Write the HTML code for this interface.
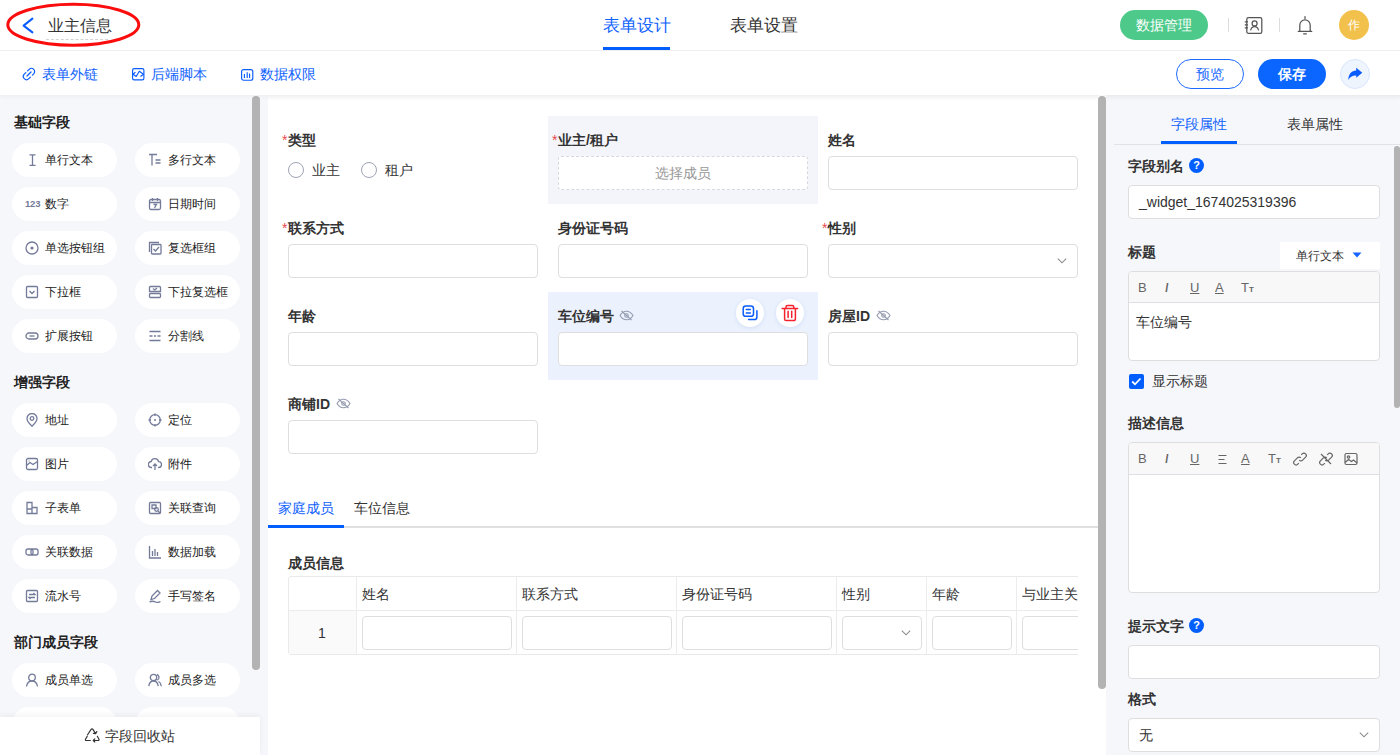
<!DOCTYPE html>
<html><head><meta charset="utf-8">
<style>
*{box-sizing:border-box;margin:0;padding:0}
html,body{width:1400px;height:755px;overflow:hidden;background:#fff;font-family:"Liberation Sans",sans-serif;color:#333}
.a{position:absolute}
#hdr{left:0;top:0;width:1400px;height:51px;background:#fff;border-bottom:1px solid #eeeff1}
#tb{left:0;top:51px;width:1400px;height:44px;background:#fff;box-shadow:0 2px 4px rgba(0,0,0,.04);z-index:2}
#lp{left:0;top:95px;width:268px;height:660px;background:#f6f7fb}
#cv{left:268px;top:95px;width:838px;height:660px;background:#fff}
#rp{left:1106px;top:95px;width:294px;height:660px;background:#f6f7fb}
.sb{background:#b3b3b3;border-radius:4px}
.pill{position:absolute;width:105px;height:34px;background:#fff;border-radius:17px}
.pill .t{position:absolute;left:33px;top:10px;font-size:12px;line-height:14px;color:#222;white-space:nowrap}
.pill svg{position:absolute;left:13px;top:10px}
.sec{position:absolute;left:14px;font-size:14px;font-weight:bold;color:#222;line-height:16px}
.lbl{position:absolute;font-size:14px;font-weight:bold;color:#333;line-height:16px;white-space:nowrap}
.req{color:#e5484d;font-weight:normal;display:inline-block;width:6px;font-size:14px}
.inp{position:absolute;width:250px;height:34px;border:1px solid #dedede;border-radius:4px;background:#fff}
</style></head><body>
<div id="hdr" class="a">
<svg class="a" style="left:0;top:0" width="150" height="50"><ellipse cx="73.3" cy="24.8" rx="65.5" ry="20.5" fill="none" stroke="#fb0d0d" stroke-width="3"/></svg>
<svg class="a" style="left:22px;top:17px" width="14" height="18"><path d="M10.4 1.6 L1.6 8.6 L10.4 15.4" fill="none" stroke="#0a5cff" stroke-width="2" stroke-linecap="round" stroke-linejoin="round"/></svg>
<div class="a" style="left:48px;top:16px;font-size:16px;line-height:19px;color:#333">业主信息</div>
<div class="a" style="left:46px;top:39px;width:62px;border-top:1px dashed #d4d4d4"></div>
<div class="a" style="left:603px;top:16px;font-size:16.5px;line-height:19px;color:#0f62fe">表单设计</div>
<div class="a" style="left:603px;top:47px;width:67px;height:3px;background:#005eff"></div>
<div class="a" style="left:730px;top:16px;font-size:16.5px;line-height:19px;color:#333">表单设置</div>
<div class="a" style="left:1120px;top:10px;width:88px;height:30px;border-radius:15px;background:#4dc98a;color:#fff;font-size:14px;font-weight:500;line-height:30px;text-align:center">数据管理</div>
<div class="a" style="left:1228px;top:18px;width:1px;height:14px;background:#dcdcdc"></div>
<div class="a" style="left:1279px;top:18px;width:1px;height:14px;background:#dcdcdc"></div>
<svg class="a" style="left:1243px;top:15px" width="22" height="21" fill="none" stroke="#555" stroke-width="1.25"><rect x="3.8" y="2.6" width="15" height="15.8" rx="1.6"/><path d="M1.8 6.8h3.2M1.8 9.8h3.2M1.8 12.8h3.2"/><circle cx="11.6" cy="8.4" r="2.5"/><path d="M7.6 15.4c0.6-2.6 2-3.8 4-3.8s3.4 1.2 4 3.8"/></svg>
<svg class="a" style="left:1296px;top:15px" width="18" height="21" fill="none" stroke="#555" stroke-width="1.25"><path d="M3.8 16V10.2a5.2 5.4 0 0 1 10.4 0V16M2.3 16.4h13.4" stroke-linejoin="round" stroke-linecap="round"/><path d="M9 1.6v2M7.6 18.8h2.8" stroke-linecap="round"/></svg>
<div class="a" style="left:1339px;top:10px;width:30px;height:30px;border-radius:15px;background:#f2c14b;color:#fff;font-size:12px;font-weight:500;line-height:30px;text-align:center">作</div>
</div>
<div id="tb" class="a">
<svg class="a" style="left:21.7px;top:15.8px" width="14" height="14" fill="none" stroke="#0a5cff" stroke-width="1.2" stroke-linecap="round"><path d="M5.6 3.9L7.2 2.3A3 3 0 0 1 11.7 6.8L10.4 8.1M8.4 10.1L6.8 11.7A3 3 0 0 1 2.3 7.2L3.8 5.7M5 9L9 5"/></svg>
<div class="a" style="left:42px;top:15px;font-size:14px;line-height:17px;color:#0f62fe">表单外链</div>
<svg class="a" style="left:132px;top:17px" width="13" height="13" fill="none" stroke="#0a5cff" stroke-width="1.15" stroke-linejoin="round"><rect x="0.6" y="0.6" width="11.3" height="11.3" rx="1.6"/><path d="M3.4 4.3L1 6.2L4.2 8.5L7.3 3.2L11.5 6.2L8.5 8.5"/></svg>
<div class="a" style="left:151px;top:15px;font-size:14px;line-height:17px;color:#0f62fe">后端脚本</div>
<svg class="a" style="left:241px;top:18px" width="13" height="12" fill="none" stroke="#0a5cff" stroke-width="1.15"><rect x="0.6" y="0.6" width="11.2" height="10.6" rx="2"/><path d="M3.4 5v4M6.2 3.2v5.8M8.6 4.5v4.5"/></svg>
<div class="a" style="left:260px;top:15px;font-size:14px;line-height:17px;color:#0f62fe">数据权限</div>
<div class="a" style="left:1176px;top:8px;width:68px;height:30px;border-radius:15px;border:1px solid #1f6bff;color:#1f6bff;font-size:14px;line-height:28px;text-align:center">预览</div>
<div class="a" style="left:1258px;top:8px;width:68px;height:30px;border-radius:15px;background:#0a66ff;color:#fff;font-size:14px;line-height:30px;text-align:center;font-weight:bold">保存</div>
<div class="a" style="left:1340px;top:8px;width:30px;height:30px;border-radius:15px;background:#eff5ff;border:1px solid #d9e6fc"></div>
<svg class="a" style="left:1347px;top:16px" width="17" height="15"><path d="M9.2 0.7L15.3 5.7L9.2 10.8V8.4C5.5 8.2 3 9.8 1.2 12.9C1.5 7 4.5 3.6 9.2 3.4Z" fill="#0a5cff"/></svg>
</div>
<div id="lp" class="a">
<div class="pill" style="left:12px;top:48px"><svg width="14" height="14"><path d="M4.5 1.8h6M7.5 1.8v10.6M4.5 12.4h6" fill="none" stroke="#737b99" stroke-width="1.3"/></svg><div class="t">单行文本</div></div>
<div class="pill" style="left:135px;top:48px"><svg width="14" height="14"><path d="M1 1.5h8M4 1.5v11M7.5 7h5M7.5 10h5" fill="none" stroke="#737b99" stroke-width="1.3"/></svg><div class="t">多行文本</div></div>
<div class="pill" style="left:12px;top:92px"><div class="a" style="left:13px;top:11px;font-size:9.5px;font-weight:bold;color:#737b99;line-height:11px;letter-spacing:-0.2px">123</div><div class="t">数字</div></div>
<div class="pill" style="left:135px;top:92px"><svg width="14" height="14"><rect x="1.5" y="2.5" width="11" height="10" rx="1.5" fill="none" stroke="#737b99" stroke-width="1.3"/><path d="M1.5 5.5h11M4.5 1v3M9.5 1v3M5.5 7.5h3l-2 3.5" fill="none" stroke="#737b99" stroke-width="1.3"/></svg><div class="t">日期时间</div></div>
<div class="pill" style="left:12px;top:136px"><svg width="14" height="14"><circle cx="7" cy="7" r="6" fill="none" stroke="#737b99" stroke-width="1.3"/><circle cx="7" cy="7" r="1.6" fill="#737b99"/></svg><div class="t">单选按钮组</div></div>
<div class="pill" style="left:135px;top:136px"><svg width="14" height="14"><path d="M1.5 11V1.5H11" fill="none" stroke="#737b99" stroke-width="1.3"/><rect x="3.5" y="3.5" width="9.5" height="9.5" rx="0.8" fill="none" stroke="#737b99" stroke-width="1.3"/><path d="M5.5 8l2 2 3.5-4" fill="none" stroke="#737b99" stroke-width="1.3"/></svg><div class="t">复选框组</div></div>
<div class="pill" style="left:12px;top:180px"><svg width="14" height="14"><rect x="1.5" y="1.5" width="11" height="11" rx="1" fill="none" stroke="#737b99" stroke-width="1.3"/><path d="M4.5 6l2.5 2.5L9.5 6" fill="none" stroke="#737b99" stroke-width="1.3"/></svg><div class="t">下拉框</div></div>
<div class="pill" style="left:135px;top:180px"><svg width="14" height="14"><path d="M1.5 6.5V2.5a1 1 0 0 1 1-1h9a1 1 0 0 1 1 1v4Z" fill="none" stroke="#737b99" stroke-width="1.3"/><rect x="1.5" y="8.5" width="11" height="4" rx="1" fill="none" stroke="#737b99" stroke-width="1.3"/><path d="M5 3.5l1.8 1.5L9 3" fill="none" stroke="#737b99" stroke-width="1.3"/></svg><div class="t">下拉复选框</div></div>
<div class="pill" style="left:12px;top:224px"><svg width="14" height="14"><rect x="1" y="4" width="12" height="6" rx="3" fill="none" stroke="#737b99" stroke-width="1.3"/><path d="M4.5 7h5" fill="none" stroke="#737b99" stroke-width="1.3"/></svg><div class="t">扩展按钮</div></div>
<div class="pill" style="left:135px;top:224px"><svg width="14" height="14"><path d="M1.5 2.5h11M1.5 7h3M6 7h2M9.5 7h3M1.5 11.5h11" fill="none" stroke="#737b99" stroke-width="1.3"/></svg><div class="t">分割线</div></div>
<div class="pill" style="left:12px;top:308px"><svg width="14" height="14"><path d="M7 13.2S2 8.6 2 5.5a5 5 0 0 1 10 0c0 3.1-5 7.7-5 7.7Z" fill="none" stroke="#737b99" stroke-width="1.3"/><circle cx="7" cy="5.5" r="1.8" fill="none" stroke="#737b99" stroke-width="1.3"/></svg><div class="t">地址</div></div>
<div class="pill" style="left:135px;top:308px"><svg width="14" height="14"><circle cx="7" cy="7" r="5.3" fill="none" stroke="#737b99" stroke-width="1.3"/><path d="M7 0.5v2.5M7 11v2.5M0.5 7H3M11 7h2.5" fill="none" stroke="#737b99" stroke-width="1.3"/><circle cx="7" cy="7" r="1" fill="#737b99"/></svg><div class="t">定位</div></div>
<div class="pill" style="left:12px;top:352px"><svg width="14" height="14"><rect x="1.5" y="1.5" width="11" height="11" rx="1.5" fill="none" stroke="#737b99" stroke-width="1.3"/><path d="M1.5 8.5L5 5.5l3 2 4.5-3" fill="none" stroke="#737b99" stroke-width="1.3"/><circle cx="4" cy="4" r="0.6" fill="#737b99"/></svg><div class="t">图片</div></div>
<div class="pill" style="left:135px;top:352px"><svg width="14" height="14"><path d="M4 10.5H3.5a3 3 0 0 1-0.3-6 3.8 3.8 0 0 1 7.4 0.2 2.8 2.8 0 0 1 0 5.8H10" fill="none" stroke="#737b99" stroke-width="1.3"/><path d="M7 13V7M5 9l2-2 2 2" fill="none" stroke="#737b99" stroke-width="1.3"/></svg><div class="t">附件</div></div>
<div class="pill" style="left:12px;top:396px"><svg width="14" height="14"><path d="M2 1.5h5v11H2ZM7 6.5h5v6H7ZM2 8h5" fill="none" stroke="#737b99" stroke-width="1.3"/></svg><div class="t">子表单</div></div>
<div class="pill" style="left:135px;top:396px"><svg width="14" height="14"><rect x="1.5" y="1.5" width="11" height="11" rx="1" fill="none" stroke="#737b99" stroke-width="1.3"/><path d="M4 4h4v3.5H4Z" fill="none" stroke="#737b99" stroke-width="1.3"/><circle cx="8.5" cy="8.5" r="1.8" fill="none" stroke="#737b99" stroke-width="1.3"/><path d="M10 10l2 2" fill="none" stroke="#737b99" stroke-width="1.3"/></svg><div class="t">关联查询</div></div>
<div class="pill" style="left:12px;top:440px"><svg width="14" height="14"><rect x="1" y="4" width="7" height="6" rx="2" fill="none" stroke="#737b99" stroke-width="1.3"/><rect x="6" y="4" width="7" height="6" rx="2" fill="none" stroke="#737b99" stroke-width="1.3"/></svg><div class="t">关联数据</div></div>
<div class="pill" style="left:135px;top:440px"><svg width="14" height="14"><path d="M1.5 1v12h11.5M4.5 6v5M7 4v7M9.5 7v4" fill="none" stroke="#737b99" stroke-width="1.3"/></svg><div class="t">数据加载</div></div>
<div class="pill" style="left:12px;top:484px"><svg width="14" height="14"><rect x="1.5" y="1.5" width="11" height="11" rx="1" fill="none" stroke="#737b99" stroke-width="1.3"/><path d="M4 5.5h6L8.5 4M10 8.5H4l1.5 1.5" fill="none" stroke="#737b99" stroke-width="1.3"/></svg><div class="t">流水号</div></div>
<div class="pill" style="left:135px;top:484px"><svg width="14" height="14"><path d="M3 10.5l1-3.5 5.5-5.5 2.5 2.5-5.5 5.5ZM1.5 13c2-1 4-1 6 0s3.5 0 5-0.5" fill="none" stroke="#737b99" stroke-width="1.3"/></svg><div class="t">手写签名</div></div>
<div class="pill" style="left:12px;top:568px"><svg width="14" height="14"><circle cx="7" cy="4.5" r="3.3" fill="none" stroke="#737b99" stroke-width="1.3"/><path d="M1.5 13.5c0.5-3.5 2.5-5.5 5.5-5.5s5 2 5.5 5.5" fill="none" stroke="#737b99" stroke-width="1.3"/></svg><div class="t">成员单选</div></div>
<div class="pill" style="left:135px;top:568px"><svg width="14" height="14"><circle cx="5.5" cy="4.5" r="3.2" fill="none" stroke="#737b99" stroke-width="1.3"/><path d="M0.8 13.2c0.4-3.3 2.2-5.2 4.7-5.2s4.3 1.9 4.7 5.2M8.8 1.5a3 3 0 0 1 0.5 5.6M10.5 8.5c1.6 0.8 2.6 2.4 2.8 4.7" fill="none" stroke="#737b99" stroke-width="1.3"/></svg><div class="t">成员多选</div></div>
<div class="pill" style="left:12px;top:612px"></div>
<div class="pill" style="left:135px;top:612px"></div>
<div class="sec" style="top:19px">基础字段</div>
<div class="sec" style="top:279px">增强字段</div>
<div class="sec" style="top:539px">部门成员字段</div>
<div class="a sb" style="left:252px;top:1px;width:8px;height:574px"></div>
<div class="a" style="left:0;top:622px;width:260px;height:38px;background:#fff;box-shadow:0 -2px 6px rgba(0,0,0,.05)"></div>
<svg class="a" style="left:84px;top:633px" width="17" height="15" fill="none" stroke="#333" stroke-width="1.15" stroke-linecap="round" stroke-linejoin="round"><path d="M3.4 7L6.9 1.6Q8 0.2 9.1 1.6L11.6 5.6M12.8 3.6L11.6 5.6 9.4 5.4"/><path d="M13.3 8.3L14.9 11Q15.5 12.5 14 12.5H9.2M10.8 10.9L9.2 12.5 10.8 14"/><path d="M6.4 12.5H2.4Q0.9 12.5 1.6 11L3.2 8.4"/></svg>
<div class="a" style="left:105px;top:633px;font-size:14px;line-height:17px;color:#333">字段回收站</div>
</div>
<div id="cv" class="a">
<div class="a" style="left:0;top:0;width:830px;height:6px;background:linear-gradient(#f7f7f8,#fff)"></div>
<div class="a" style="left:280px;top:21px;width:270px;height:88px;background:#f4f5fa"></div>
<div class="a" style="left:280px;top:197px;width:270px;height:88px;background:#ebf2fe"></div>
<div class="lbl" style="left:14px;top:37px"><span class="req">*</span>类型</div>
<div class="a" style="left:20px;top:67px;width:16px;height:16px;border:1px solid #9ea3b5;border-radius:50%"></div>
<div class="a" style="left:44px;top:67px;font-size:14px;line-height:16px;color:#333">业主</div>
<div class="a" style="left:93px;top:67px;width:16px;height:16px;border:1px solid #9ea3b5;border-radius:50%"></div>
<div class="a" style="left:117px;top:67px;font-size:14px;line-height:16px;color:#333">租户</div>
<div class="lbl" style="left:284px;top:37px"><span class="req">*</span>业主/租户</div>
<div class="a" style="left:290px;top:61px;width:250px;height:34px;border:1px dashed #d5d8de;border-radius:3px;background:#fff;color:#999;font-size:14px;line-height:32px;text-align:center">选择成员</div>
<div class="lbl" style="left:560px;top:37px">姓名</div>
<div class="inp" style="left:560px;top:61px;width:250px"></div>
<div class="lbl" style="left:14px;top:125px"><span class="req">*</span>联系方式</div>
<div class="inp" style="left:20px;top:149px;width:250px"></div>
<div class="lbl" style="left:290px;top:125px">身份证号码</div>
<div class="inp" style="left:290px;top:149px;width:250px"></div>
<div class="lbl" style="left:554px;top:125px"><span class="req">*</span>性别</div>
<div class="inp" style="left:560px;top:149px;width:250px"></div>
<svg class="a" style="left:788px;top:162px" width="12" height="8" fill="none" stroke="#8a8a8a" stroke-width="1.05"><path d="M1.8 1.6L6 5.8l4.2-4.2"/></svg>
<div class="lbl" style="left:20px;top:213px">年龄</div>
<div class="inp" style="left:20px;top:237px;width:250px"></div>
<div class="lbl" style="left:290px;top:213px">车位编号</div>
<svg class="a" style="left:351px;top:215px" width="15" height="11" fill="none" stroke="#959cb0" stroke-width="1.1"><path d="M1 5.5C2.8 2.5 5 1.2 7.5 1.2S12.2 2.5 14 5.5C12.2 8.5 10 9.8 7.5 9.8S2.8 8.5 1 5.5Z"/><circle cx="7.5" cy="5.5" r="1.8"/><path d="M2.5 1l10 9"/></svg>
<div class="inp" style="left:290px;top:237px;width:250px"></div>
<div class="lbl" style="left:560px;top:213px">房屋ID</div>
<svg class="a" style="left:608px;top:215px" width="15" height="11" fill="none" stroke="#959cb0" stroke-width="1.1"><path d="M1 5.5C2.8 2.5 5 1.2 7.5 1.2S12.2 2.5 14 5.5C12.2 8.5 10 9.8 7.5 9.8S2.8 8.5 1 5.5Z"/><circle cx="7.5" cy="5.5" r="1.8"/><path d="M2.5 1l10 9"/></svg>
<div class="inp" style="left:560px;top:237px;width:250px"></div>
<div class="a" style="left:468px;top:204px;width:28px;height:28px;border-radius:50%;background:#fff;box-shadow:0 1px 4px rgba(30,80,160,.12)"></div>
<svg class="a" style="left:473px;top:209px" width="18" height="18" fill="none" stroke="#0a5cff" stroke-width="1.5" stroke-linecap="round"><rect x="2.2" y="1.9" width="10.3" height="10.4" rx="2.6"/><path d="M5.3 5.4h4M5.3 9h4"/><path d="M15.9 6.8V13a2.6 2.6 0 0 1-2.6 2.6H7.6"/></svg>
<div class="a" style="left:508px;top:204px;width:28px;height:28px;border-radius:50%;background:#fff;box-shadow:0 1px 4px rgba(30,80,160,.12)"></div>
<svg class="a" style="left:513px;top:209px" width="18" height="18" fill="none" stroke="#f5222d" stroke-width="1.5" stroke-linejoin="round"><path d="M1.2 4.5h15.4" stroke-linecap="round"/><path d="M5 4.4V3a1.6 1.6 0 0 1 1.6-1.6h4.6A1.6 1.6 0 0 1 12.8 3v1.4"/><path d="M3.6 4.6v10.4a1.6 1.6 0 0 0 1.6 1.6h7.6a1.6 1.6 0 0 0 1.6-1.6V4.6"/><path d="M7.1 7.2v6.4M10.7 7.2v6.4" stroke-linecap="round"/></svg>
<div class="lbl" style="left:20px;top:301px">商铺ID</div>
<svg class="a" style="left:68px;top:303px" width="15" height="11" fill="none" stroke="#959cb0" stroke-width="1.1"><path d="M1 5.5C2.8 2.5 5 1.2 7.5 1.2S12.2 2.5 14 5.5C12.2 8.5 10 9.8 7.5 9.8S2.8 8.5 1 5.5Z"/><circle cx="7.5" cy="5.5" r="1.8"/><path d="M2.5 1l10 9"/></svg>
<div class="inp" style="left:20px;top:325px;width:250px"></div>
<div class="a" style="left:0px;top:431px;width:830px;height:2px;background:#e0e0e0"></div>
<div class="a" style="left:0px;top:430px;width:76px;height:3px;background:#005eff"></div>
<div class="a" style="left:10px;top:405px;font-size:14px;line-height:16px;color:#0f62fe">家庭成员</div>
<div class="a" style="left:86px;top:405px;font-size:14px;line-height:16px;color:#333">车位信息</div>
<div class="lbl" style="left:20px;top:460px">成员信息</div>
<div class="a" style="left:20px;top:481px;width:790px;height:79px;overflow:hidden">
<div class="a" style="left:0;top:0;width:900px;height:79px;border:1px solid #e9e9e9;border-radius:3px"></div>
<div class="a" style="left:1px;top:35px;width:67px;height:43px;background:#fafafa"></div>
<div class="a" style="left:0;top:34px;width:900px;height:1px;background:#ececec"></div>
<div class="a" style="left:68px;top:0;width:1px;height:79px;background:#ececec"></div>
<div class="a" style="left:74px;top:10px;font-size:14px;line-height:16px;color:#333;white-space:nowrap">姓名</div>
<div class="a" style="left:74px;top:40px;width:150px;height:34px;border:1px solid #dedede;border-radius:4px;background:#fff"></div>
<div class="a" style="left:228px;top:0;width:1px;height:79px;background:#ececec"></div>
<div class="a" style="left:234px;top:10px;font-size:14px;line-height:16px;color:#333;white-space:nowrap">联系方式</div>
<div class="a" style="left:234px;top:40px;width:150px;height:34px;border:1px solid #dedede;border-radius:4px;background:#fff"></div>
<div class="a" style="left:388px;top:0;width:1px;height:79px;background:#ececec"></div>
<div class="a" style="left:394px;top:10px;font-size:14px;line-height:16px;color:#333;white-space:nowrap">身份证号码</div>
<div class="a" style="left:394px;top:40px;width:150px;height:34px;border:1px solid #dedede;border-radius:4px;background:#fff"></div>
<div class="a" style="left:548px;top:0;width:1px;height:79px;background:#ececec"></div>
<div class="a" style="left:554px;top:10px;font-size:14px;line-height:16px;color:#333;white-space:nowrap">性别</div>
<div class="a" style="left:554px;top:40px;width:80px;height:34px;border:1px solid #dedede;border-radius:4px;background:#fff"></div>
<div class="a" style="left:638px;top:0;width:1px;height:79px;background:#ececec"></div>
<div class="a" style="left:644px;top:10px;font-size:14px;line-height:16px;color:#333;white-space:nowrap">年龄</div>
<div class="a" style="left:644px;top:40px;width:80px;height:34px;border:1px solid #dedede;border-radius:4px;background:#fff"></div>
<div class="a" style="left:728px;top:0;width:1px;height:79px;background:#ececec"></div>
<div class="a" style="left:734px;top:10px;font-size:14px;line-height:16px;color:#333;white-space:nowrap">与业主关系</div>
<div class="a" style="left:734px;top:40px;width:150px;height:34px;border:1px solid #dedede;border-radius:4px;background:#fff"></div>
<div class="a" style="left:0;top:49px;width:68px;text-align:center;font-size:14px;line-height:16px;color:#333">1</div>
<svg class="a" style="left:612px;top:53px" width="12" height="8" fill="none" stroke="#8a8a8a" stroke-width="1.05"><path d="M1.8 1.6L6 5.8l4.2-4.2"/></svg>
</div>
<div class="a sb" style="left:830px;top:1px;width:8px;height:593px"></div>
</div>
<div id="rp" class="a">
<div class="a" style="left:0;top:0;width:294px;height:5px;background:linear-gradient(#f1f2f5,#f5f6fa)"></div>
<div class="a" style="left:65px;top:21px;font-size:14px;line-height:16px;color:#0f62fe">字段属性</div>
<div class="a" style="left:181px;top:21px;font-size:14px;line-height:16px;color:#333">表单属性</div>
<div class="a" style="left:8px;top:49px;width:286px;height:1px;background:#e1e3e8"></div>
<div class="a" style="left:55px;top:46px;width:76px;height:3px;background:#005eff"></div>
<div class="a sb" style="left:288px;top:51px;width:6px;height:262px;border-radius:3px"></div>
<div class="lbl" style="left:22px;top:63px">字段别名</div>
<div class="a" style="left:83px;top:63px;width:15px;height:15px;border-radius:50%;background:#005eff;color:#fff;font-size:11px;font-weight:bold;line-height:15px;text-align:center">?</div>
<div class="a" style="left:22px;top:90px;width:252px;height:34px;border:1px solid #dedede;border-radius:4px;background:#fff;font-size:14px;line-height:32px;padding-left:10px;color:#333">_widget_1674025319396</div>
<div class="lbl" style="left:22px;top:149px">标题</div>
<div class="a" style="left:174px;top:147px;width:100px;height:27px;background:#fff;border-radius:2px"></div>
<div class="a" style="left:190px;top:154px;font-size:12px;line-height:14px;color:#333">单行文本</div>
<svg class="a" style="left:246px;top:157px" width="10" height="6"><path d="M0.5 0.5h9L5 5.5Z" fill="#1663ff"/></svg>
<div class="a" style="left:22px;top:176px;width:252px;height:90px;border:1px solid #dedede;border-radius:4px;background:#fff;overflow:hidden">
<div class="a" style="left:0;top:0;width:252px;height:31px;background:#f8f8f9;border-bottom:1px solid #dcdfe6"></div>
<div class="a" style="left:9px;top:10px;font-size:13px;line-height:12px;color:#666">B</div>
<div class="a" style="left:36px;top:10px;font-size:13px;line-height:12px;color:#666;font-style:italic;font-weight:bold;transform:scaleX(0.8)">I</div>
<div class="a" style="left:61px;top:10px;font-size:13px;line-height:12px;color:#666;text-decoration:underline">U</div>
<div class="a" style="left:86px;top:10px;font-size:13px;line-height:12px;color:#666;text-decoration:underline">A</div>
<div class="a" style="left:112px;top:10px;font-size:13px;line-height:12px;color:#666;font-weight:500">T<span style="font-size:8px;font-weight:bold">T</span></div>
<div class="a" style="left:7px;top:42px;font-size:14px;line-height:16px;color:#333">车位编号</div>
</div>
<div class="a" style="left:23px;top:279px;width:15px;height:15px;border-radius:2px;background:#005eff"></div>
<svg class="a" style="left:23px;top:279px" width="15" height="15" fill="none" stroke="#fff" stroke-width="1.8"><path d="M3.2 7.5l2.8 2.8 5.5-5.8"/></svg>
<div class="a" style="left:46px;top:278px;font-size:14px;line-height:16px;color:#333">显示标题</div>
<div class="lbl" style="left:22px;top:320px">描述信息</div>
<div class="a" style="left:22px;top:347px;width:252px;height:151px;border:1px solid #dedede;border-radius:4px;background:#fff;overflow:hidden">
<div class="a" style="left:0;top:0;width:252px;height:32px;background:#f8f8f9;border-bottom:1px solid #dcdfe6"></div>
<div class="a" style="left:9px;top:10px;font-size:13px;line-height:12px;color:#666">B</div>
<div class="a" style="left:36px;top:10px;font-size:13px;line-height:12px;color:#666;font-style:italic;font-weight:bold;transform:scaleX(0.8)">I</div>
<div class="a" style="left:61px;top:10px;font-size:13px;line-height:12px;color:#666;text-decoration:underline">U</div>
<svg class="a" style="left:88px;top:10px" width="12" height="12" stroke="#666" stroke-width="1.1"><path d="M1.5 2.5h8M1.5 6.5h6M1.5 10.5h8"/></svg>
<div class="a" style="left:112px;top:10px;font-size:13px;line-height:12px;color:#666;text-decoration:underline">A</div>
<div class="a" style="left:139px;top:10px;font-size:13px;line-height:12px;color:#666;font-weight:500">T<span style="font-size:8px;font-weight:bold">T</span></div>
<svg class="a" style="left:164px;top:9px" width="14" height="14" fill="none" stroke="#666" stroke-width="1.2"><path d="M8.2 2.8l1-1a2.4 2.4 0 0 1 3.4 3.4l-3 3a2.4 2.4 0 0 1-3.4 0M5.8 11.2l-1 1a2.4 2.4 0 0 1-3.4-3.4l3-3a2.4 2.4 0 0 1 3.4 0"/></svg>
<svg class="a" style="left:190px;top:9px" width="14" height="14" fill="none" stroke="#666" stroke-width="1.2"><path d="M8.2 2.8l1-1a2.4 2.4 0 0 1 3.4 3.4l-3 3a2.4 2.4 0 0 1-3.4 0M5.8 11.2l-1 1a2.4 2.4 0 0 1-3.4-3.4l3-3a2.4 2.4 0 0 1 3.4 0M2 2l10 10"/></svg>
<svg class="a" style="left:215px;top:9px" width="14" height="14" fill="none" stroke="#666" stroke-width="1.2"><rect x="1" y="1.5" width="12" height="11" rx="1.5"/><circle cx="4.5" cy="5" r="1.2"/><path d="M1 10.5l3.5-3 3 2 2-1.5 3.5 3"/></svg>
</div>
<div class="lbl" style="left:22px;top:523px">提示文字</div>
<div class="a" style="left:83px;top:523px;width:15px;height:15px;border-radius:50%;background:#005eff;color:#fff;font-size:11px;font-weight:bold;line-height:15px;text-align:center">?</div>
<div class="a" style="left:22px;top:550px;width:252px;height:34px;border:1px solid #dedede;border-radius:4px;background:#fff"></div>
<div class="lbl" style="left:22px;top:596px">格式</div>
<div class="a" style="left:22px;top:623px;width:252px;height:34px;border:1px solid #dedede;border-radius:4px;background:#fff;font-size:14px;line-height:32px;padding-left:10px;color:#333">无</div>
<svg class="a" style="left:252px;top:636px" width="12" height="8" fill="none" stroke="#8a8a8a" stroke-width="1.05"><path d="M1.8 1.6L6 5.8l4.2-4.2"/></svg>
</div>
</body></html>
